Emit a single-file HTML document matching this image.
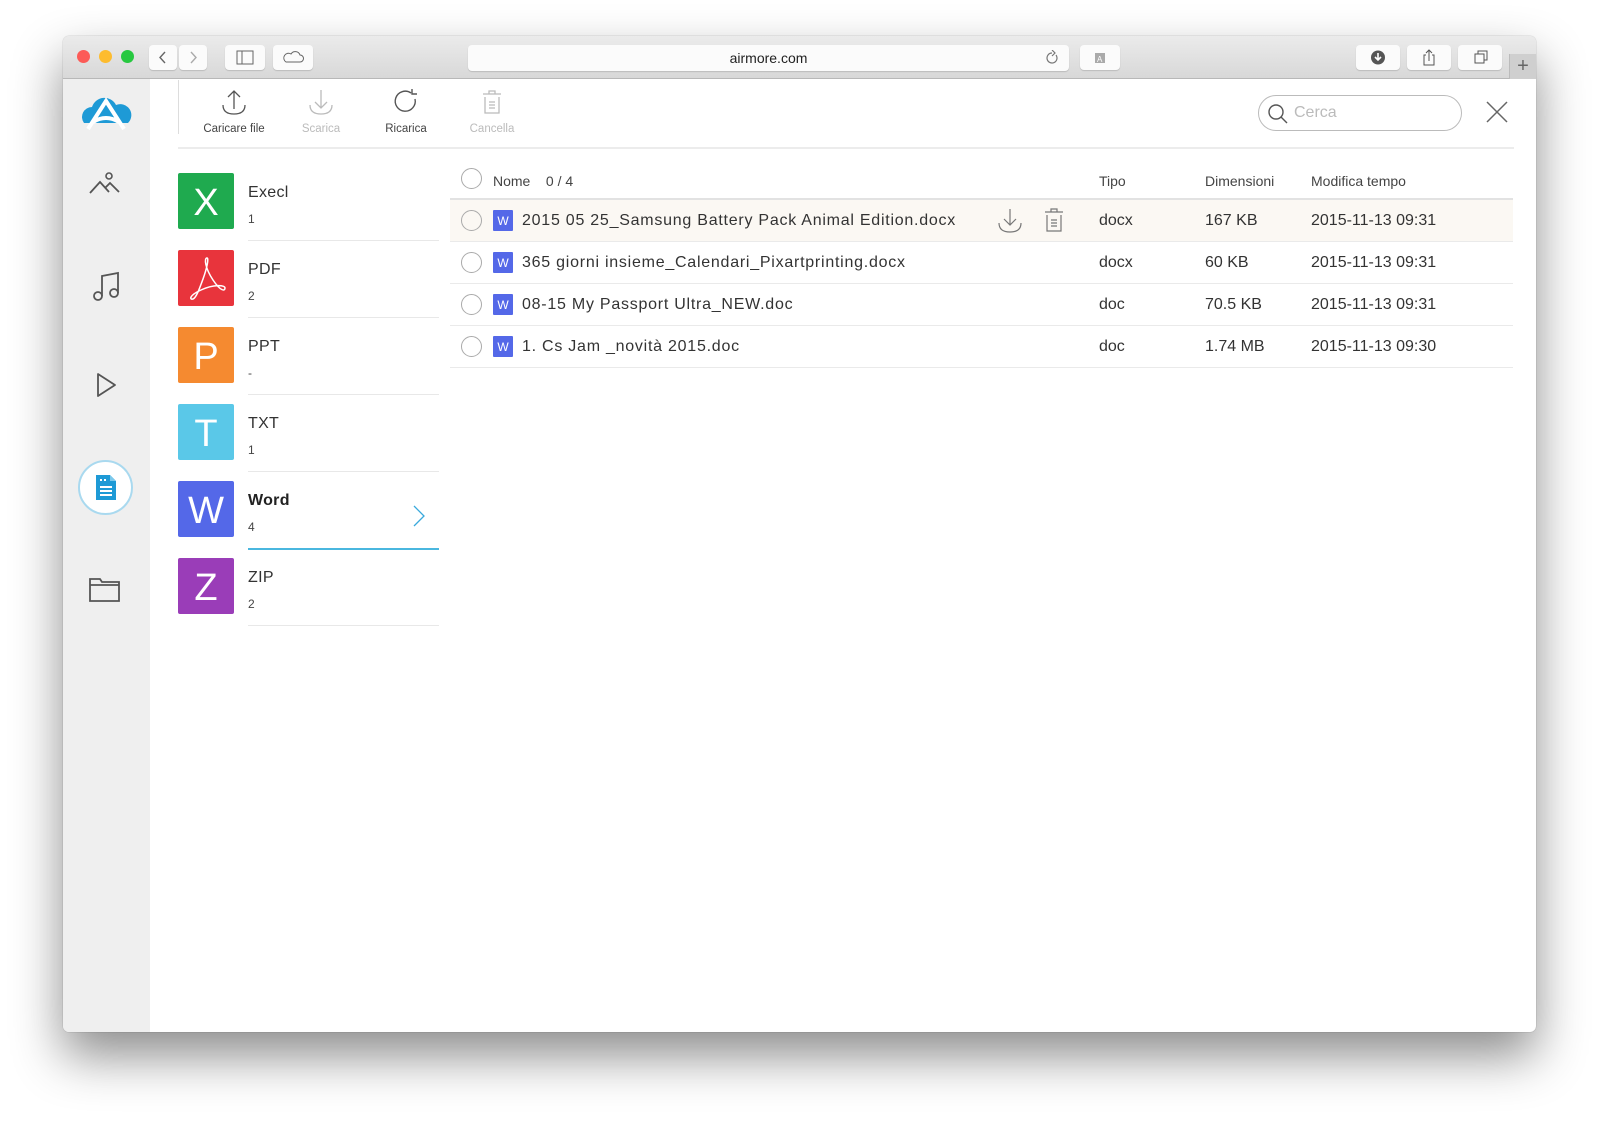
<!DOCTYPE html>
<html><head><meta charset="utf-8"><style>
*{box-sizing:border-box;margin:0;padding:0}
body{width:1600px;height:1123px;background:#fff;position:relative;overflow:hidden;font-family:"Liberation Sans",sans-serif;color:#333}
.win{position:absolute;left:63px;top:36px;width:1473px;height:996px;background:#fff;border-radius:6px;box-shadow:0 24px 50px rgba(0,0,0,.45),0 0 1px rgba(0,0,0,.4);overflow:hidden}
.tb{position:absolute;left:0;top:0;width:100%;height:43px;background:linear-gradient(#ebebeb,#d8d8d8);border-bottom:1px solid #b8b8b8}
.dot{position:absolute;top:14px;width:13px;height:13px;border-radius:50%}
.btn{position:absolute;top:9px;height:25px;background:#fbfbfb;border-radius:4px;box-shadow:0 1px 1px rgba(0,0,0,.15)}
.addr{position:absolute;left:405px;top:9px;width:601px;height:26px;background:#fbfbfb;border-radius:4px;box-shadow:0 1px 1px rgba(0,0,0,.15);text-align:center;font-size:14px;line-height:26px;color:#222}
.side{position:absolute;left:0;top:43px;width:87px;bottom:0;background:#efefef}
.tool{position:absolute;top:51px;width:80px;text-align:center;font-size:11.5px}
.tool svg{display:block;margin:0 auto 6px}
.cat{position:absolute;left:115px;width:261px;height:77px}
.cat .ic{position:absolute;left:0;top:0;width:56px;height:56px;border-radius:2px;color:#fff;font-size:38px;text-align:center;line-height:60px}
.cat .n{position:absolute;left:70px;top:11px;font-size:16px;color:#333;letter-spacing:.3px}
.cat .c{position:absolute;left:70px;top:39px;font-size:12px;color:#444}
.cat .l{position:absolute;left:70px;right:0;top:67px;border-top:1px solid #e8e8e8}
.row{position:absolute;left:387px;width:1063px;height:42px;border-bottom:1px solid #eaeaea;font-size:16px}
.row>*{position:absolute;top:0;line-height:41px}
.row span.f{letter-spacing:.75px}
.ck{width:21px;height:21px;border:1px solid #aaa;border-radius:50%;top:10px!important;left:11px}
.w{left:43px;top:10px!important;width:20px;height:21px;background:#5468e8;color:#fff;font-size:12px;line-height:23px!important;text-align:center;border-radius:1px}
</style></head><body>
<div class="win">
 <div class="tb">
  <div class="dot" style="left:14px;background:#fc5b57"></div>
  <div class="dot" style="left:36px;background:#fdbc2e"></div>
  <div class="dot" style="left:58px;background:#27c840"></div>
  <div class="btn" style="left:86px;width:28px"><svg width="28" height="25"><path d="M16 7l-5 5.5 5 5.5" stroke="#666" stroke-width="1.4" fill="none"/></svg></div>
  <div class="btn" style="left:116px;width:28px"><svg width="28" height="25"><path d="M12 7l5 5.5-5 5.5" stroke="#aaa" stroke-width="1.4" fill="none"/></svg></div>
  <div class="btn" style="left:162px;width:40px"><svg width="40" height="25"><rect x="12" y="6" width="16" height="13" stroke="#666" fill="none"/><path d="M17 6v13" stroke="#666"/></svg></div>
  <div class="btn" style="left:210px;width:40px"><svg width="40" height="25"><path d="M13 17h14a3.5 3.5 0 0 0 0-7 5 5 0 0 0-9-1 4 4 0 0 0-5 8z" stroke="#666" fill="none"/></svg></div>
  <div class="addr">airmore.com<svg style="position:absolute;right:10px;top:5px" width="14" height="16"><path d="M11 5a5 5 0 1 1-4-2M7 0l3 3-3 3" stroke="#777" fill="none" stroke-width="1.2"/></svg></div>
  <div class="btn" style="left:1017px;width:40px"><svg width="40" height="25"><rect x="15" y="8" width="10" height="10" fill="#aaa"/><text x="17" y="17" font-size="8" fill="#fff" font-family="Liberation Sans">A</text></svg></div>
  <div class="btn" style="left:1293px;width:44px"><svg width="44" height="25"><circle cx="22" cy="12.5" r="7" fill="#555"/><path d="M22 8v7M19 12l3 3 3-3" stroke="#fff" stroke-width="1.6" fill="none"/></svg></div>
  <div class="btn" style="left:1344px;width:44px"><svg width="44" height="25"><path d="M19 10h-2v10h10v-10h-2M22 16V5M19 8l3-3 3 3" stroke="#555" fill="none"/></svg></div>
  <div class="btn" style="left:1395px;width:44px"><svg width="44" height="25"><rect x="17" y="9" width="9" height="9" stroke="#555" fill="none"/><path d="M20 9V6h9v9h-3" stroke="#555" fill="none"/></svg></div>
  <div style="position:absolute;left:1446px;top:18px;width:27px;height:25px;background:#cfcfcf;border-left:1px solid #bbb;text-align:center;font-size:20px;line-height:24px;color:#666">+</div>
 </div>
 <div class="side">
  <svg style="position:absolute;left:17px;top:16px" width="52" height="36" viewBox="0 0 52 36"><path d="M4 28a10 10 0 0 1 8-16 13 13 0 0 1 24-2 11 11 0 0 1 12 18z" fill="#1e9ad6"/><path d="M8 34L26 6 44 34M13 27q13-8 26 0" stroke="#fff" stroke-width="4" fill="none"/></svg>
  <svg style="position:absolute;left:25px;top:92px" width="36" height="28"><circle cx="21" cy="5" r="3" stroke="#555" stroke-width="1.6" fill="none"/><path d="M2 22l10-11 9 10M17 17l5-5 9 9" stroke="#555" stroke-width="1.8" fill="none"/></svg>
  <svg style="position:absolute;left:28px;top:190px" width="32" height="34"><path d="M11 27V7l16-3v20" stroke="#555" stroke-width="1.8" fill="none"/><circle cx="7" cy="27" r="4" stroke="#555" stroke-width="1.8" fill="none"/><circle cx="23" cy="24" r="4" stroke="#555" stroke-width="1.8" fill="none"/></svg>
  <svg style="position:absolute;left:32px;top:292px" width="24" height="28"><path d="M3 3l17 11-17 11z" stroke="#555" stroke-width="1.8" fill="none" stroke-linejoin="round"/></svg>
  <div style="position:absolute;left:15px;top:381px;width:55px;height:55px;border-radius:50%;border:2px solid #a9d9ef;background:#fff"></div>
  <svg style="position:absolute;left:31px;top:395px" width="24" height="27"><path d="M2 1h14l6 6v19H2z" fill="#1e9ad6"/><path d="M16 1v6h6" fill="#7cc9ec"/><path d="M6 6h2M10 6h2M6 13h12M6 17h12M6 21h12" stroke="#fff" stroke-width="2"/></svg>
  <svg style="position:absolute;left:25px;top:497px" width="34" height="28"><path d="M2 6V3h10l2 3h17v3M2 6v19h29V9H2" stroke="#555" stroke-width="1.8" fill="none"/></svg>
 </div>
 <div style="position:absolute;left:115px;top:44px;height:54px;border-left:1px solid #ddd"></div>
 <div class="tool" style="left:131px;color:#444"><svg width="30" height="30"><path d="M15 22V4M9 10l6-6 6 6M4 18q0 9 11 9t11-9" stroke="#555" stroke-width="1.3" fill="none"/></svg>Caricare file</div>
 <div class="tool" style="left:218px;color:#bbb"><svg width="30" height="30"><path d="M15 3v18M9 15l6 6 6-6M4 18q0 9 11 9t11-9" stroke="#bbb" stroke-width="1.3" fill="none"/></svg>Scarica</div>
 <div class="tool" style="left:303px;color:#444"><svg width="30" height="30"><path d="M24 12a10 10 0 1 1-4-6M21 2v5h5" stroke="#555" stroke-width="1.4" fill="none"/></svg>Ricarica</div>
 <div class="tool" style="left:389px;color:#bbb"><svg width="30" height="30"><path d="M6 7h18M12 7V4h6v3M8 10v16h14V10M12 15h6M12 18h6M12 21h6" stroke="#bbb" stroke-width="1.3" fill="none"/></svg>Cancella</div>
 <div style="position:absolute;left:1195px;top:59px;width:204px;height:36px;border:1px solid #bbb;border-radius:18px"><svg style="position:absolute;left:8px;top:7px" width="22" height="22"><circle cx="9" cy="9" r="7" stroke="#555" stroke-width="1.4" fill="none"/><path d="M14 14l6 6" stroke="#555" stroke-width="1.4"/></svg><span style="position:absolute;left:35px;top:8px;font-size:16px;color:#bbb">Cerca</span></div>
 <svg style="position:absolute;left:1423px;top:65px" width="22" height="22"><path d="M1 1l20 20M21 1L1 21" stroke="#666" stroke-width="1.5"/></svg>
 <div style="position:absolute;left:115px;right:22px;top:111px;border-top:2px solid #ececec"></div>

 <div class="cat" style="top:137px"><div class="ic" style="background:#1faa4f">X</div><div class="n">Execl</div><div class="c">1</div><div class="l"></div></div>
 <div class="cat" style="top:214px"><div class="ic" style="background:#e8343c"><svg width="56" height="56"><path d="M29 8c-3 0-2 10 6 22s12 11 12 8-11-4-24 2-11 10-8 9 6-9 10-20 6-21 4-21" stroke="#fff" stroke-width="1.5" fill="none"/></svg></div><div class="n">PDF</div><div class="c">2</div><div class="l"></div></div>
 <div class="cat" style="top:291px"><div class="ic" style="background:#f58a30">P</div><div class="n">PPT</div><div class="c">-</div><div class="l"></div></div>
 <div class="cat" style="top:368px"><div class="ic" style="background:#5ac8e8">T</div><div class="n">TXT</div><div class="c">1</div><div class="l"></div></div>
 <div class="cat" style="top:445px"><div class="ic" style="background:#5468e8">W</div><div class="n" style="font-weight:bold;color:#222">Word</div><div class="c">4</div><div class="l" style="border-top:2px solid #4ab7df"></div><svg style="position:absolute;left:234px;top:23px" width="14" height="24"><path d="M2 2l10 10-10 10" stroke="#3aa9dc" stroke-width="1.3" fill="none"/></svg></div>
 <div class="cat" style="top:522px"><div class="ic" style="background:#9a3db8">Z</div><div class="n">ZIP</div><div class="c">2</div><div class="l"></div></div>

 <div class="row" style="top:124px;height:40px;border-bottom:2px solid #e2e2e2;font-size:14px;color:#444"><div class="ck" style="top:8px!important"></div><span style="left:43px;line-height:42px">Nome&nbsp;&nbsp;&nbsp;&nbsp;0 / 4</span><span style="left:649px;line-height:42px">Tipo</span><span style="left:755px;line-height:42px">Dimensioni</span><span style="left:861px;line-height:42px">Modifica tempo</span></div>
 <div class="row" style="top:164px;background:#fbf8f3"><div class="ck"></div><div class="w">W</div><span class="f" style="left:72px">2015 05 25_Samsung Battery Pack Animal Edition.docx</span>
  <svg style="position:absolute;left:546px;top:6px" width="28" height="28"><path d="M14 3v16M8 13l6 6 6-6M3 17q0 9 11 9t11-9" stroke="#777" stroke-width="1.2" fill="none"/></svg>
  <svg style="position:absolute;left:592px;top:6px" width="26" height="28"><path d="M3 6h18M9 6V3h6v3M5 9v16h14V9M9 14h6M9 17h6M9 20h6" stroke="#777" stroke-width="1.2" fill="none"/></svg>
  <span style="left:649px">docx</span><span style="left:755px">167 KB</span><span style="left:861px">2015-11-13 09:31</span></div>
 <div class="row" style="top:206px"><div class="ck"></div><div class="w">W</div><span class="f" style="left:72px">365 giorni insieme_Calendari_Pixartprinting.docx</span><span style="left:649px">docx</span><span style="left:755px">60 KB</span><span style="left:861px">2015-11-13 09:31</span></div>
 <div class="row" style="top:248px"><div class="ck"></div><div class="w">W</div><span class="f" style="left:72px">08-15 My Passport Ultra_NEW.doc</span><span style="left:649px">doc</span><span style="left:755px">70.5 KB</span><span style="left:861px">2015-11-13 09:31</span></div>
 <div class="row" style="top:290px"><div class="ck"></div><div class="w">W</div><span class="f" style="left:72px">1. Cs Jam _novità 2015.doc</span><span style="left:649px">doc</span><span style="left:755px">1.74 MB</span><span style="left:861px">2015-11-13 09:30</span></div>
</div>
</body></html>
